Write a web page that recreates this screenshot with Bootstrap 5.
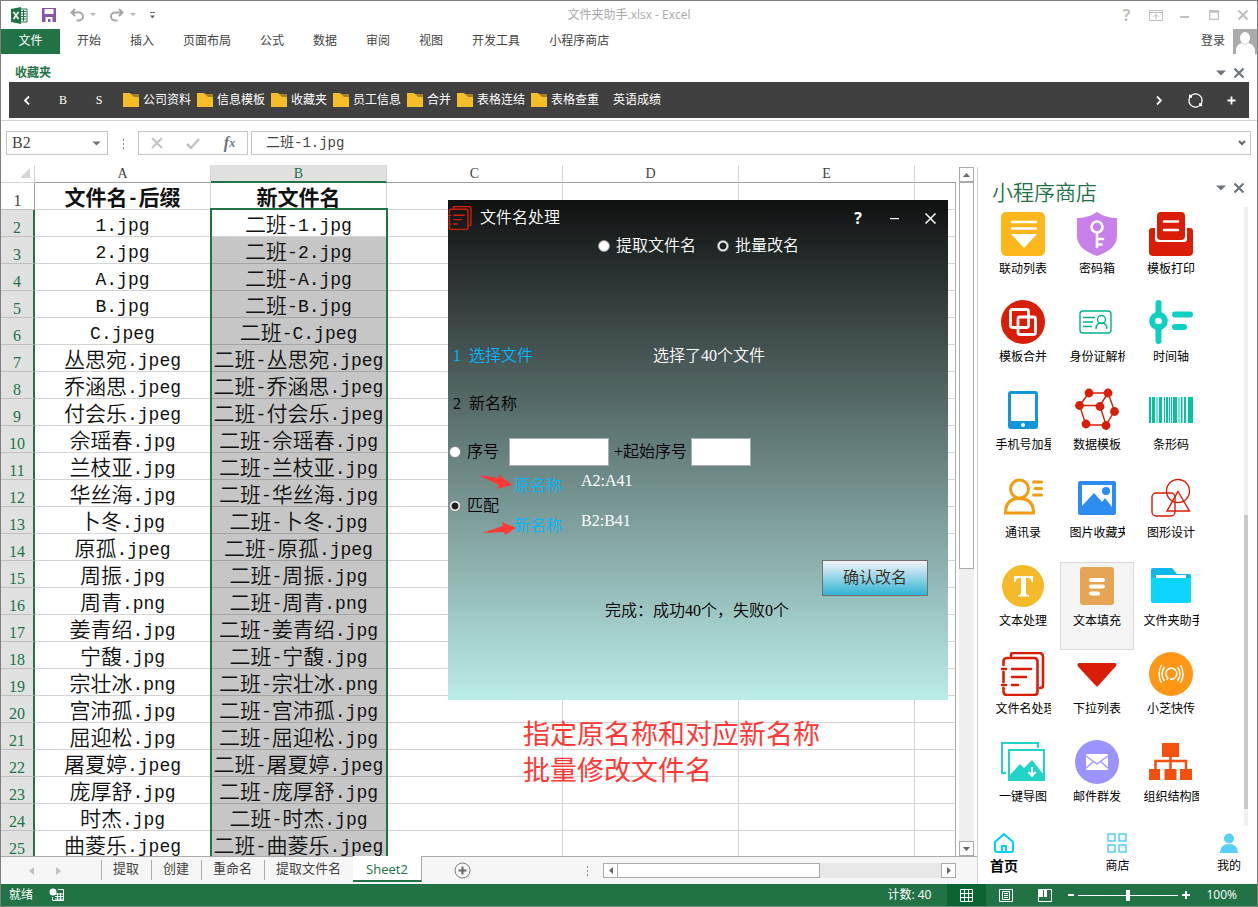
<!DOCTYPE html>
<html lang="zh-CN">
<head>
<meta charset="utf-8">
<meta name="viewport" content="width=device-width, initial-scale=1">
<title>文件夹助手.xlsx - Excel</title>
<link rel="stylesheet" href="https://cdn.jsdelivr.net/npm/bootstrap@5.3.0/dist/css/bootstrap.min.css">
<style>
  :root { --xl: #217346; --line: #d4d4d4; --edge: #ababab; --head: #e1e1e1; }
  body { font: 12px/18px "Open Sans", "Noto Sans CJK SC", sans-serif; color: #444; }
  svg { display: block; flex: none; }
  a { color: inherit; text-decoration: none; }
  .btn { --bs-btn-padding-x: 0; --bs-btn-padding-y: 0; --bs-btn-border-width: 0; --bs-btn-border-radius: 0; font: inherit; color: inherit; display: flex; align-items: center; justify-content: center; }
  .app { height: 100vh; border: 1px solid #7f7f7f; overflow: hidden; background: #fff; }
  .app > * { flex: none; }

  .titlebar { height: 28px; display: grid; grid-template-columns: 1fr auto 1fr; }
  .quick { gap: 14px; padding-left: 10px; }
  .doc-title { color: #aaa; }
  .win-keys { color: #c0c0c0; }
  .win-keys .btn { width: 29px; height: 28px; }
  .ribbon { height: 25px; }
  .ribbon .tabs { gap: 29px; padding-left: 17px; line-height: 24px; }
  .file-tab { width: 59px; background: var(--xl); color: #fff; line-height: 24px; }
  .avatar { width: 24px; height: 25px; }

  .fav-head { height: 28px; padding: 9px 9px 0 14px; color: var(--xl); font-weight: 700; }
  .pane-key { width: 18px; height: 18px; }
  .fav-bar { height: 36px; margin: 0 8px 2px; background: #404040; color: #fff; }
  .fav-bar .key { width: 36px; height: 36px; font-size: 12px; font-family: "Liberation Serif", serif; }
  .fav-list { gap: 6px; padding-left: 6px; }
  .fav-list .btn { gap: 4px; }

  .formula { border-top: 1px solid var(--line); padding: 10px 6px 0 5px; }
  .boxed { height: 24px; border: 1px solid #c6c6c6; background: #fff; }
  .name-box { width: 102px; }
  .name-box input { font: 16px/22px "Liberation Serif", serif; width: 80px; padding: 0 0 0 5px; margin-right: 5px; }
  .fx-box { width: 110px; margin-right: 3px; }
  .fx-input { font: 14px/22px "Liberation Mono", "Noto Sans CJK SC", monospace; padding: 0 0 0 14px; }
  .plain { border: 0; outline: 0; background: none; color: #444; }
  .dots3 { width: 3px; height: 11px; background: radial-gradient(circle, #888 1px, transparent 1px) 0 0 / 3px 4px; }
  .formula .dots3 { margin: 0 13px 0 14px; }

  .app > .work { flex: 1 1 0; min-height: 0; }
  .book { min-width: 0; }
  .sheet-zone { min-height: 0; padding-top: 10px; overflow: hidden; }
  .sheet { overflow: hidden; min-width: 0; }
  .grid-table { table-layout: fixed; width: 100%; border-collapse: separate; border-spacing: 0; color: #111; }
  .grid-table th, .grid-table td { padding: 0; height: 27px; text-align: center; white-space: nowrap; font-weight: 400; }
  .grid-table td { border-right: 1px solid var(--line); border-bottom: 1px solid var(--line); font: 350 21px/24px "Noto Sans CJK SC", sans-serif; }
  .grid-table td:last-child { border-right-color: var(--edge); }
  .grid-table td .latin { font: 18px/14px "Liberation Mono", monospace; vertical-align: 1px; }
  .grid-table thead th { height: 18px; border-bottom: 1px solid #9f9f9f; border-right: 1px solid var(--line); font: 14px/16px "Liberation Serif", serif; color: #444; vertical-align: bottom; }
  .grid-table thead th:last-child { border-right: 0; }
  .grid-table thead th:first-child { border-bottom-color: var(--line); }
  .grid-table thead th.on { background: var(--head); color: var(--xl); border-bottom: 2px solid var(--xl); line-height: 15px; }
  .grid-table tbody th { font: 16px/16px "Liberation Serif", serif; vertical-align: bottom; background: var(--head); color: var(--xl); border-bottom: 1px solid #c0c0c0; border-right: 2px solid var(--xl); }
  .grid-table tbody tr:first-child th { background: #fff; color: #444; border-right: 1px solid #9f9f9f; }
  .grid-table tbody tr:first-child td, .grid-table tbody tr:first-child td .latin { font-weight: 700; }
  .grid-table tr.picked td:nth-child(3) { background: #c6c6c6; border-bottom-color: #a6a6a6; }
  .selection { left: 209px; top: 43px; width: 178px; bottom: 0; border: solid var(--xl); border-width: 2px 2px 0; }

  .vbar { width: 15px; margin: 2px 3px 0; background: #f0f0f0; }
  .vbar .btn, .hbar .btn { width: 15px; height: 15px; border: 1px solid var(--edge); background: #fff; color: #666; }
  .thumb { background: #fff; border: 1px solid var(--edge); }
  .vbar .thumb { flex: 387 0 0; }
  .vbar .rest { flex: 274 0 0; }
  .sheet-tabs { flex: none; height: 28px; background: #f6f6f6; border-top: 1px solid var(--edge); }
  .sheet-tabs .nav-keys { width: 100px; padding: 0 12px 0 28px; color: #c0c0c0; gap: 22px; }
  .sheet-tabs .tabs { font-size: 13px; line-height: 20px; }
  .sheet-tabs .tabs a { border-left: 1px solid var(--edge); padding: 0 12px 0 11px; height: 20px; margin-top: 3px; line-height: 17px; }
  .sheet-tabs .tabs a.current { height: 26px; margin-top: -1px; padding: 4px 13px 0; line-height: 18px; background: #fff; color: var(--xl); border: 0; border-right: 1px solid var(--edge); border-bottom: 2px solid var(--xl); }
  .add-tab { margin-left: 32px; }
  .hbar { width: 353px; height: 15px; margin: 0 21px 0 14px; background: #e8e8e8; }
  .hbar .thumb { flex: 202 0 0; height: 15px; margin-left: -1px; }
  .hbar .rest { flex: 122 0 0; }

  .store { flex: none; width: 280px; border-left: 1px solid var(--line); margin-top: 12px; color: #000; }
  .store-head { height: 40px; padding: 0 9px 0 14px; }
  .store-head h2 { font: 350 21px/26px "Noto Sans CJK SC", sans-serif; color: var(--xl); margin: 11px 0 0; }
  .store-head .pane-key { margin-top: 12px; }
  .store-body { min-height: 0; padding: 3px 9px 0 8px; }
  .tiles { display: grid; grid-template-columns: repeat(3, 74px); grid-auto-rows: 88px; }
  .btn.tile { width: 74px; height: 88px; border: 1px solid transparent; padding-top: 1px; flex-direction: column; justify-content: flex-start; }
  .btn.tile:nth-child(14) { background: #f5f5f5; border-color: #d9d9d9; }
  .tile-name { margin-top: 3px; white-space: nowrap; line-height: 18px; font-family: "Noto Sans CJK SC", sans-serif; }
  .tile-name.cut { width: 55px; overflow: hidden; text-align: left; }
  .rail { width: 4px; background: #f0f0f0; margin-top: -3px; }
  .rail .gap-top { flex: 308 0 0; }
  .rail .grip { flex: 294 0 0; background: #c9c9c9; }
  .rail .gap-end { flex: 17 0 0; }
  .store-nav { height: 58px; padding: 7px 16px 0 12px; }
  .store-nav a { text-align: center; min-width: 24px; }
  .store-nav svg { margin: 0 auto 4px; }
  .store-nav a.current { font-size: 14px; font-weight: 700; }

  .status { height: 22px; background: var(--xl); color: #fff; }
  .view-key { width: 39px; height: 22px; }
  .view-key.active { background: #0a6332; }
  .zoom-range { appearance: none; width: 100px; height: 11px; background: linear-gradient(#fff, #fff) center / 100% 1px no-repeat; }
  .zoom-range::-webkit-slider-thumb { appearance: none; width: 4px; height: 11px; background: #fff; }

  .dialog-box { left: 447px; top: 45px; width: 500px; height: 500px; background: linear-gradient(#101111, #bbede8); font: 350 16px/20px "Liberation Serif", "Noto Sans CJK SC", serif; color: #000; }
  .dlg-title { height: 36px; color: #fff; }
  .dlg-title .btn { width: 36px; height: 36px; }
  .dlg-mode { height: 20px; padding-left: 150px; gap: 21px; color: #fff; }
  .dialog-box label { display: flex; align-items: center; gap: 6px; }
  .dot-radio { appearance: none; width: 12px; height: 12px; margin: 0; border: 1px solid #888; border-radius: 50%; background: #fff; flex: none; }
  .dot-radio:checked { background: radial-gradient(circle, #1c2020 3px, #fff 4px); }
  .sky { color: #00b7ff; }
  .dlg-pick { margin-top: 90px; padding-left: 5px; }
  .dlg-pick .picked-count { margin-left: 120px; }
  .dlg-name { margin-top: 28px; padding-left: 5px; }
  .dlg-serial { margin-top: 24px; height: 28px; padding-left: 1px; }
  .dlg-serial input[type=text] { height: 28px; border: 1px solid #abadb3; background: #fff; }
  .dlg-serial .w-a { width: 100px; margin: 0 5px 0 10px; }
  .dlg-serial .w-b { width: 60px; }
  .dialog-box .start-no { gap: 4px; }
  .dlg-match { padding-left: 1px; gap: 15px; }
  .dlg-match .pair { height: 40px; line-height: 40px; gap: 19px; }
  .dlg-match .pair span { line-height: 30px; }
  .go { width: 106px; height: 36px; margin: 14px 20px 0 auto; background: linear-gradient(#f4f4fa, #30b4d3); border: 1px solid #707070; color: #3a2a20; }
  .dlg-result { margin-top: 5px; padding-left: 157px; }
  .arrow-a { left: 30px; top: 274px; } .arrow-b { left: 34px; top: 322px; }
  .caption { left: 522px; top: 560px; font: 27px/36px "Noto Sans CJK SC", sans-serif; color: #ff3a36; }
</style>
</head>
<body>
<svg class="d-none" aria-hidden="true">
  <symbol id="tri" viewBox="0 0 10 6"><path d="M0 0.500h10L5 5.500z" fill="currentColor"/></symbol>
  <symbol id="cross" viewBox="0 0 12 12"><path d="M1.500 1.500l9 9M10.500 1.500l-9 9" stroke="currentColor" stroke-width="2.200"/></symbol>
  <symbol id="folder" viewBox="0 0 16 14"><path d="M6 1h10v5H6z" fill="#a5802a"/><path d="M0 0h7l4 4h5v10H0z" fill="#f5bd28"/></symbol>
  <symbol id="papers" viewBox="0 0 44 44"><g fill="none" stroke="#d81e06" stroke-width="2.600" stroke-linecap="round"><path d="M10 4V3q0-2 2-2h26q4 0 4 4v28q0 3-3 3"/><path d="M2.500 13V9.500q0-3.500 3.500-3.500h27q3.500 0 3.500 3.500v30q0 3.500-3.500 3.500H6q-3.500 0-3.500-3.500V36M2.500 20v10M1 17h4M1 33h4M11 17h19M11 25h14M11 33h6"/></g></symbol>
</svg>

<div class="app d-flex flex-column">
  <header class="titlebar">
    <div class="quick d-flex align-items-center">
      <svg width="17" height="17" viewBox="0 0 17 17"><path d="M9 2h7v13H9z" fill="#fff" stroke="#217346"/><path d="M10 4.500h5M10 7h5M10 9.500h5M10 12h5M12.500 3v11" stroke="#217346"/><path d="M0 2l10-2v17L0 15z" fill="#217346"/><path d="M2.500 5l5 7M7.500 5l-5 7" stroke="#fff" stroke-width="1.600"/></svg>
      <button class="btn" aria-label="保存"><svg width="14" height="14" viewBox="0 0 14 14"><path d="M0 0h14v14H0z" fill="#8654a8"/><path d="M2.500 1h9v5h-9zM3.500 9h7v5h-2v-3H6v3H3.500z" fill="#fff"/></svg></button>
      <button class="btn" aria-label="撤销"><svg width="26" height="14" viewBox="0 0 26 14"><path d="M5 1L1.500 4.500 5 8M2 4.500h7a3.800 3.800 0 0 1 0 8H6.500" fill="none" stroke="#a6a6a6" stroke-width="2"/><path d="M20 5h6l-3 3z" fill="#b8b8b8"/></svg></button>
      <button class="btn" aria-label="恢复"><svg width="26" height="14" viewBox="0 0 26 14"><path d="M9 1l3.500 3.500L9 8M12 4.500H5a3.800 3.800 0 0 0 0 8h2.500" fill="none" stroke="#a6a6a6" stroke-width="2"/><path d="M20 5h6l-3 3z" fill="#b8b8b8"/></svg></button>
      <button class="btn" aria-label="自定义快速访问工具栏"><svg width="5" height="7" viewBox="0 0 5 7"><path d="M0 0h5v1H0zM0 3.500h5L2.500 6.500z" fill="#666"/></svg></button>
    </div>
    <div class="doc-title align-self-center">文件夹助手.xlsx - Excel</div>
    <div class="win-keys d-flex justify-content-end">
      <button class="btn fw-bold fs-6" aria-label="帮助">?</button>
      <button class="btn" aria-label="功能区显示选项"><svg width="14" height="11" viewBox="0 0 14 11"><path d="M.5.500h13v10H.5zM1 2.500h12M7 9V4.500M4.500 6.500L7 4.500l2.500 2" fill="none" stroke="currentColor"/></svg></button>
      <button class="btn" aria-label="最小化"><svg width="9" height="12" viewBox="0 0 9 12"><path d="M0 7h9v2H0z" fill="currentColor"/></svg></button>
      <button class="btn" aria-label="最大化"><svg width="10" height="10" viewBox="0 0 10 10"><path d="M.5.500h9v9h-9zM0 2h10" fill="none" stroke="currentColor" stroke-width="1.500"/></svg></button>
      <button class="btn" aria-label="关闭"><svg width="12" height="12"><use href="#cross"/></svg></button>
    </div>
  </header>

  <nav class="ribbon d-flex">
    <a href="#" class="file-tab text-center">文件</a>
    <div class="tabs d-flex flex-grow-1">
      <a href="#">开始</a><a href="#">插入</a><a href="#">页面布局</a><a href="#">公式</a><a href="#">数据</a><a href="#">审阅</a><a href="#">视图</a><a href="#">开发工具</a><a href="#">小程序商店</a>
    </div>
    <a href="#" class="me-2 lh-lg">登录</a>
    <svg class="avatar" viewBox="0 0 24 25"><path d="M0 0h24v25H0z" fill="#ababab"/><ellipse cx="12" cy="9" rx="5" ry="6" fill="#fff"/><path d="M3 25v-5q1-5 6-6 3 3 6 0 5 1 7 6v5z" fill="#fff"/></svg>
  </nav>

  <div class="fav-head d-flex align-items-center">
    <span class="me-auto">收藏夹</span>
    <button class="btn pane-key text-secondary" aria-label="面板选项"><svg width="10" height="6"><use href="#tri"/></svg></button>
    <button class="btn pane-key text-secondary" aria-label="关闭面板"><svg width="12" height="12"><use href="#cross"/></svg></button>
  </div>
  <div class="fav-bar d-flex align-items-center">
    <button class="btn key" aria-label="向左"><svg width="6" height="9" viewBox="0 0 6 9"><path d="M5 .500l-4 4 4 4" fill="none" stroke="#fff" stroke-width="1.800"/></svg></button>
    <button class="btn key">B</button>
    <button class="btn key">S</button>
    <div class="fav-list d-flex flex-grow-1">
      <button class="btn"><svg width="16" height="14"><use href="#folder"/></svg>公司资料</button>
      <button class="btn"><svg width="16" height="14"><use href="#folder"/></svg>信息模板</button>
      <button class="btn"><svg width="16" height="14"><use href="#folder"/></svg>收藏夹</button>
      <button class="btn"><svg width="16" height="14"><use href="#folder"/></svg>员工信息</button>
      <button class="btn"><svg width="16" height="14"><use href="#folder"/></svg>合并</button>
      <button class="btn"><svg width="16" height="14"><use href="#folder"/></svg>表格连结</button>
      <button class="btn"><svg width="16" height="14"><use href="#folder"/></svg>表格查重</button>
      <button class="btn ps-2">英语成绩</button>
    </div>
    <button class="btn key" aria-label="向右"><svg width="6" height="9" viewBox="0 0 6 9"><path d="M1 .500l4 4-4 4" fill="none" stroke="#fff" stroke-width="1.800"/></svg></button>
    <button class="btn key" aria-label="刷新"><svg width="15" height="15" viewBox="0 0 15 15" fill="none" stroke="#fff"><path d="M4 2a6.500 6.500 0 0 1 10 5.500q0 2-1 3.500M11 13a6.500 6.500 0 0 1-10-5.500q0-2 1-3.500" stroke-width="1.300"/><path d="M1 3.300h3M11 11.700h3" stroke-width="3"/></svg></button>
    <button class="btn key" aria-label="添加"><svg width="9" height="9" viewBox="0 0 9 9"><path d="M4.500 .500v8M.5 4.500h8" stroke="#fff" stroke-width="1.800"/></svg></button>
  </div>

  <div class="formula d-flex align-items-center">
    <div class="boxed name-box d-flex align-items-center">
      <input class="plain" type="text" value="B2" aria-label="名称框">
      <button class="btn text-secondary" aria-label="展开名称"><svg width="9" height="5"><use href="#tri"/></svg></button>
    </div>
    <div class="dots3"></div>
    <div class="boxed fx-box d-flex align-items-center justify-content-around">
      <button class="btn" aria-label="取消"><svg width="12" height="12" viewBox="0 0 12 12"><path d="M1 1l10 10M11 1L1 11" stroke="#c4c4c4" stroke-width="2"/></svg></button>
      <button class="btn" aria-label="输入"><svg width="14" height="11" viewBox="0 0 14 11"><path d="M1 6l4 4 8-9" fill="none" stroke="#c4c4c4" stroke-width="2.500"/></svg></button>
      <button class="btn fst-italic fw-bold text-secondary" style="font-family:'Liberation Serif',serif" aria-label="插入函数"><span class="fs-6">f</span>x</button>
    </div>
    <div class="boxed flex-grow-1 d-flex align-items-center pe-1">
      <input class="plain fx-input flex-grow-1" type="text" value="二班-1.jpg" aria-label="编辑栏">
      <button class="btn" aria-label="展开编辑栏"><svg width="8" height="6" viewBox="0 0 8 6"><path d="M1 1l3 3 3-3" fill="none" stroke="#666" stroke-width="2"/></svg></button>
    </div>
  </div>

  <main class="work d-flex position-relative">
    <section class="book d-flex flex-column flex-grow-1">
      <div class="sheet-zone d-flex flex-grow-1">
        <div class="sheet flex-grow-1 position-relative">
          <table class="grid-table">
            <colgroup><col style="width:34px"><col style="width:176px"><col style="width:176px"><col style="width:176px"><col style="width:176px"><col style="width:176px"><col></colgroup>
            <thead><tr><th aria-label="全选"><svg class="ms-auto me-1 mb-1" width="10" height="10"><path d="M10 0v10H0z" fill="#d4d4d4"/></svg></th><th>A</th><th class="on">B</th><th>C</th><th>D</th><th>E</th><th></th></tr></thead>
            <tbody id="rows"></tbody>
          </table>
          <div class="selection position-absolute"></div>
        </div>
        <div class="vbar d-flex flex-column">
          <button class="btn" aria-label="向上滚动"><svg width="7" height="4" viewBox="0 0 7 4"><path d="M0 4h7L3.500 0z" fill="currentColor"/></svg></button>
          <div class="thumb"></div><div class="rest"></div>
          <button class="btn" aria-label="向下滚动"><svg width="7" height="4" viewBox="0 0 7 4"><path d="M0 0h7L3.500 4z" fill="currentColor"/></svg></button>
        </div>
      </div>
      <div class="sheet-tabs d-flex align-items-center">
        <div class="nav-keys d-flex">
          <button class="btn" aria-label="上一张"><svg width="5" height="8" viewBox="0 0 5 8"><path d="M5 0v8L0 4z" fill="#c0c0c0"/></svg></button>
          <button class="btn" aria-label="下一张"><svg width="5" height="8" viewBox="0 0 5 8"><path d="M0 0v8l5-4z" fill="#c0c0c0"/></svg></button>
        </div>
        <nav class="tabs d-flex align-self-start"><a href="#">提取</a><a href="#">创建</a><a href="#">重命名</a><a href="#">提取文件名</a><a href="#" class="current">Sheet2</a></nav>
        <button class="btn add-tab" aria-label="新工作表"><svg width="17" height="17" viewBox="0 0 17 17"><circle cx="8.500" cy="8.500" r="7.500" fill="none" stroke="#777"/><path d="M8.500 4.500v8M4.500 8.500h8" stroke="#666" stroke-width="2"/></svg></button>
        <div class="dots3 ms-auto"></div>
        <div class="hbar d-flex">
          <button class="btn" aria-label="向左滚动"><svg width="4" height="7" viewBox="0 0 4 7"><path d="M4 0v7L0 3.500z" fill="currentColor"/></svg></button>
          <div class="thumb"></div><div class="rest"></div>
          <button class="btn" aria-label="向右滚动"><svg width="4" height="7" viewBox="0 0 4 7"><path d="M0 0v7l4-3.500z" fill="currentColor"/></svg></button>
        </div>
      </div>
    </section>

    <aside class="store d-flex flex-column">
      <div class="store-head d-flex">
        <h2 class="me-auto">小程序商店</h2>
        <button class="btn pane-key text-secondary" aria-label="面板选项"><svg width="10" height="6"><use href="#tri"/></svg></button>
        <button class="btn pane-key text-secondary" aria-label="关闭面板"><svg width="12" height="12"><use href="#cross"/></svg></button>
      </div>
      <div class="store-body d-flex flex-grow-1 justify-content-between">
        <div class="tiles">
          <button class="btn tile"><svg width="44" height="44" viewBox="0 0 44 44"><rect width="44" height="44" rx="5" fill="#fbb71c"/><path d="M10 10h26M10 16.500h26" stroke="#fff" stroke-width="2.600"/><path d="M10 22h26L23 36z" fill="#fff"/></svg><span class="tile-name">联动列表</span></button>
          <button class="btn tile"><svg width="44" height="44" viewBox="0 0 44 44"><path d="M22 0q9 6 20 6v18q0 13-20 20Q2 37 2 24V6q11 0 20-6z" fill="#c880ea"/><g fill="none" stroke="#fff" stroke-width="2.600"><circle cx="22" cy="15" r="5.500"/><path d="M22 20.500V35M22 27h6M22 32.500h4.500" stroke-linecap="round"/></g></svg><span class="tile-name">密码箱</span></button>
          <button class="btn tile"><svg width="44" height="44" viewBox="0 0 44 44"><rect x="8" width="28" height="28" rx="4" fill="#d81e06"/><path d="M15 9.500h14M15 18h14" stroke="#fff" stroke-width="2.600" stroke-linecap="round"/><path d="M0 19q0-3 3-3h3v11q0 3 3 3h26q3 0 3-3V16h3q3 0 3 3v21q0 4-4 4H4q-4 0-4-4z" fill="#d81e06"/></svg><span class="tile-name">模板打印</span></button>

          <button class="btn tile"><svg width="44" height="44" viewBox="0 0 44 44"><circle cx="22" cy="22" r="22" fill="#d81e06"/><g fill="none" stroke="#fff" stroke-width="2.800"><rect x="9.500" y="9.500" width="18" height="18" rx="2"/><rect x="17" y="17" width="17.500" height="17.500" rx="2"/></g></svg><span class="tile-name">模板合并</span></button>
          <button class="btn tile"><svg width="44" height="44" viewBox="0 0 44 44"><g fill="none" stroke="#00b28b" stroke-width="1.400"><rect x="5" y="11" width="31" height="22" rx="3"/><path d="M8 17.500h12M8 22h10M8 26.500h9"/><circle cx="26.500" cy="19.500" r="4"/><path d="M21 29q0-6 5.500-6t5.500 6"/></g></svg><span class="tile-name cut">身份证解析</span></button>
          <button class="btn tile"><svg width="44" height="44" viewBox="0 0 44 44"><g fill="none" stroke="#0dd0c0" stroke-linecap="round" stroke-width="6"><path d="M9.500 3v38M26 14.500h15M26 27h9"/></g><circle cx="9.500" cy="21" r="6.300" fill="#fff" stroke="#0dd0c0" stroke-width="6"/></svg><span class="tile-name">时间轴</span></button>

          <button class="btn tile"><svg width="44" height="44" viewBox="0 0 44 44"><rect x="7" y="3" width="30" height="38" rx="3" fill="#1296db"/><path d="M10 6h24v27H10z" fill="#fff"/><circle cx="22" cy="37" r="2" fill="#fff"/></svg><span class="tile-name cut">手机号加星</span></button>
          <button class="btn tile"><svg width="44" height="44" viewBox="0 0 44 44"><g fill="none" stroke="#d81e06" stroke-width="1.400"><path d="M14 5h19l6.500 18L31 37H11L4.500 17.500zM4.500 17.500H25L33 5M25 18l6 19"/></g><g fill="#d81e06"><circle cx="14" cy="5" r="4.400"/><circle cx="33" cy="5" r="4.400"/><circle cx="4.500" cy="17.500" r="4.400"/><circle cx="25" cy="18.500" r="4.400"/><circle cx="39.500" cy="23.500" r="4.400"/><circle cx="11" cy="36" r="4.400"/><circle cx="31" cy="37.500" r="4.400"/></g></svg><span class="tile-name">数据模板</span></button>
          <button class="btn tile"><svg width="44" height="44" viewBox="0 0 44 44"><path d="M0 9h2v26H0zM3 9h3v26H3zM7.500 9h1v26h-1zM10 9h3v26h-3zM15 9h1v26h-1zM17 9h2v26h-2zM20 9h1v26h-1zM22 9h1v26h-1zM24 9h4v26h-4zM29.500 9h1v26h-1zM32 9h1.500v26H32zM35 9h2v26h-2zM39 9h5v26h-5z" fill="#00c5a0"/></svg><span class="tile-name">条形码</span></button>

          <button class="btn tile"><svg width="44" height="44" viewBox="0 0 44 44"><g fill="none" stroke="#f39c12" stroke-width="3"><circle cx="18.500" cy="13" r="9"/><path d="M4.500 37q0-14.500 14-14.500t14 14.500zM32.500 6h8M34 12.500h6.500M32.500 19h8" stroke-linecap="round"/></g></svg><span class="tile-name">通讯录</span></button>
          <button class="btn tile"><svg width="44" height="44" viewBox="0 0 44 44"><rect x="3" y="5" width="38" height="34" rx="2" fill="#2d8cf0"/><path d="M7 9h30v22l-7-9-3 4-8-9L7 30z" fill="#fff"/><circle cx="31" cy="15" r="4" fill="#2d8cf0"/></svg><span class="tile-name cut">图片收藏夹</span></button>
          <button class="btn tile"><svg width="44" height="44" viewBox="0 0 44 44"><g fill="none" stroke="#d81e06" stroke-width="1.400"><circle cx="29" cy="15" r="11.500"/><rect x="3" y="17" width="23" height="23" rx="4"/><path d="M29 15.500L40.500 35H18z"/></g></svg><span class="tile-name">图形设计</span></button>

          <button class="btn tile"><svg width="44" height="44" viewBox="0 0 44 44"><circle cx="22" cy="22" r="21" fill="#f4ba2a"/><path d="M13 12h19v6h-1.500q-.5-4-3.500-4h-2v15q0 2 3 2v1.500H17V31q3 0 3-2V14h-2q-3 0-3.500 4H13z" fill="#fff"/></svg><span class="tile-name">文本处理</span></button>
          <button class="btn tile"><svg width="44" height="44" viewBox="0 0 44 44"><rect x="5" y="3" width="34" height="38" rx="3" fill="#e6a455"/><path d="M16 16h12M16 22.500h12M16 29.500h7" stroke="#fff" stroke-width="4" stroke-linecap="round"/></svg><span class="tile-name">文本填充</span></button>
          <button class="btn tile"><svg width="44" height="44" viewBox="0 0 44 44"><path d="M2 6q0-2 2-2h19l5 6h12q2 0 2 2v6H2z" fill="#0cb8ea"/><path d="M7 11h30v4H7z" fill="#fff"/><path d="M2 14h40v23q0 2-2 2H4q-2 0-2-2z" fill="#0cd6ff"/></svg><span class="tile-name cut">文件夹助手</span></button>

          <button class="btn tile"><svg width="44" height="44"><use href="#papers"/></svg><span class="tile-name cut">文件名处理</span></button>
          <button class="btn tile"><svg width="44" height="44" viewBox="0 0 44 44"><path d="M4 11h36q2.500 1 .5 3.500L23 34q-1 1.200-2 0L3 14.500Q1.500 12 4 11z" fill="#d81e06"/></svg><span class="tile-name">下拉列表</span></button>
          <button class="btn tile"><svg width="44" height="44" viewBox="0 0 44 44"><circle cx="22" cy="22" r="22" fill="#ff9716"/><g fill="none" stroke="#fff" stroke-width="1.500"><path d="M21 27q4 1 6-2.500a5.500 5.500 0 1 0-8 1.500l-1 2M15.500 15q-5 7 0 14M12.500 13q-5 9 0 18M28.500 15q5 7 0 14M31.500 13q5 9 0 18"/></g></svg><span class="tile-name">小芝快传</span></button>

          <button class="btn tile"><svg width="44" height="44" viewBox="0 0 44 44"><g fill="none" stroke="#22d3c8" stroke-width="2"><path d="M5 33H1V3h36v5M8 10h35v30H8z"/></g><path d="M8 36l11-12 4 4 8-8 12 15v6H8z" fill="#22d3c8"/><path d="M31 27v8M27.500 32l3.500 4 3.500-4" fill="none" stroke="#fff" stroke-width="2"/></svg><span class="tile-name">一键导图</span></button>
          <button class="btn tile"><svg width="44" height="44" viewBox="0 0 44 44"><circle cx="22" cy="22" r="22" fill="#9b93ff"/><rect x="11" y="14" width="22" height="16" rx="1" fill="#fff"/><path d="M11 16l11 8 11-8M11 28l7-6M33 28l-7-6" fill="none" stroke="#9b93ff" stroke-width="1.300"/></svg><span class="tile-name">邮件群发</span></button>
          <button class="btn tile"><svg width="44" height="44" viewBox="0 0 44 44"><path d="M13 3h17v14H13zM0 29h11v11H0zM15.500 29h12v11h-12zM31 29h12v11H31z" fill="#f4500f"/><path d="M21.500 17v12M6.500 29v-8H37v8" fill="none" stroke="#f4500f" stroke-width="2.500"/></svg><span class="tile-name cut">组织结构图</span></button>
        </div>
        <div class="rail d-flex flex-column"><div class="gap-top"></div><div class="grip"></div><div class="gap-end"></div></div>
      </div>
      <nav class="store-nav d-flex justify-content-between">
        <a href="#" class="current"><svg width="20" height="20" viewBox="0 0 20 20"><path d="M1 9l9-8 9 8v8q0 2-2 2H3q-2 0-2-2zM8 19v-6h4v6" fill="none" stroke="#00d0ff" stroke-width="2" stroke-linejoin="round"/></svg>首页</a>
        <a href="#"><svg width="20" height="20" viewBox="0 0 20 20"><path d="M1 1h7v7H1zM12 1h7v7h-7zM1 12h7v7H1zM12 12h7v7h-7z" fill="#eefaff" stroke="#5ccdf5" stroke-width="1.500"/></svg>商店</a>
        <a href="#"><svg width="20" height="20" viewBox="0 0 20 20"><circle cx="10" cy="5.500" r="5" fill="#58d0fa"/><path d="M1 20q0-9 9-9t9 9z" fill="#58d0fa"/></svg>我的</a>
      </nav>
    </aside>

    <section class="dialog-box position-absolute" role="dialog" aria-label="文件名处理">
      <div class="dlg-title d-flex align-items-center">
        <svg width="24" height="24"><use href="#papers"/></svg>
        <span class="ms-2 me-auto">文件名处理</span>
        <button class="btn fw-bold fs-6" style="font-family:'Open Sans',sans-serif" aria-label="帮助">?</button>
        <button class="btn" aria-label="最小化"><svg width="9" height="3"><path d="M0 1h9v1.200H0z" fill="#fff"/></svg></button>
        <button class="btn" aria-label="关闭"><svg width="11" height="11" viewBox="0 0 11 11"><path d="M.5.500l10 10M10.500.500l-10 10" stroke="#fff" stroke-width="1.500"/></svg></button>
      </div>
      <div class="dlg-mode d-flex align-items-center">
        <label><input class="dot-radio" type="radio" name="mode">提取文件名</label>
        <label><input class="dot-radio" type="radio" name="mode" checked>批量改名</label>
      </div>
      <div class="dlg-pick d-flex"><a href="#" class="sky">1&nbsp; 选择文件</a><span class="picked-count text-white">选择了40个文件</span></div>
      <div class="dlg-name">2&nbsp; 新名称</div>
      <div class="dlg-serial d-flex align-items-center">
        <label><input class="dot-radio" type="radio" name="rule">序号</label>
        <input class="w-a" type="text" aria-label="序号前缀">
        <label class="start-no">+起始序号<input class="w-b" type="text"></label>
      </div>
      <div class="dlg-match d-flex align-items-center">
        <label><input class="dot-radio" type="radio" name="rule" checked>匹配</label>
        <div>
          <div class="pair d-flex align-items-start"><a href="#" class="sky">原名称</a><span class="text-white">A2:A41</span></div>
          <div class="pair d-flex align-items-start"><a href="#" class="sky">新名称</a><span class="text-white">B2:B41</span></div>
        </div>
      </div>
      <button class="btn go">确认改名</button>
      <div class="dlg-result">完成：成功40个，失败0个</div>
      <svg class="arrow-a position-absolute" width="34" height="16" viewBox="0 0 34 16"><path d="M0 1l21 3-1-4 14 11-15 4 2-4z" fill="#ff3a36"/></svg>
      <svg class="arrow-b position-absolute" width="34" height="14" viewBox="0 0 34 14"><path d="M0 11L21 4 20 0l14 6-11 7-1-3z" fill="#ff3a36"/></svg>
    </section>
    <p class="caption position-absolute m-0">指定原名称和对应新名称<br>批量修改文件名</p>
  </main>

  <footer class="status d-flex align-items-center">
    <span class="ms-2">就绪</span>
    <svg class="ms-3" width="16" height="14" viewBox="0 0 16 14"><circle cx="4" cy="4" r="3.500" fill="#fff"/><path d="M9 1.500h5.500v11h-11V9M6 6h8M6 8.500h8M6 11h8M8.500 5v7M11.500 5v7" fill="none" stroke="#fff"/></svg>
    <span class="ms-auto me-3">计数: 40</span>
    <button class="btn view-key active" aria-label="普通"><svg width="13" height="13" viewBox="0 0 13 13"><path d="M.5.500h12v12H.5zM4.500 0v13M8.500 0v13M0 4.500h13M0 8.500h13" fill="none" stroke="#fff"/></svg></button>
    <button class="btn view-key" aria-label="页面布局"><svg width="14" height="13" viewBox="0 0 14 13"><path d="M.5.500h13v12H.5zM3.500 2.500h7v8h-7zM5 4.500h4M5 6.500h4M5 8.500h4" fill="none" stroke="#fff"/></svg></button>
    <button class="btn view-key" aria-label="分页预览"><svg width="14" height="13" viewBox="0 0 14 13"><path d="M.5.500h13v12H.5z" fill="none" stroke="#fff"/><path d="M1 1h4v7H1zM6 1h3v7H6z" fill="#fff"/></svg></button>
    <button class="btn ps-1" aria-label="缩小"><svg width="6" height="2"><path d="M0 0h6v2H0z" fill="#fff"/></svg></button>
    <input class="zoom-range mx-1" type="range" min="10" max="190" value="100" aria-label="缩放">
    <button class="btn" aria-label="放大"><svg width="8" height="8"><path d="M3 0h2v3h3v2H5v3H3V5H0V3h3z" fill="#fff"/></svg></button>
    <span class="ms-3 me-3 pe-1">100%</span>
  </footer>
</div>

<script>
  const names = ["1.jpg", "2.jpg", "A.jpg", "B.jpg", "C.jpeg", "丛思宛.jpeg", "乔涵思.jpeg", "付会乐.jpeg", "佘瑶春.jpg", "兰枝亚.jpg", "华丝海.jpg", "卜冬.jpg", "原孤.jpeg", "周振.jpg", "周青.png", "姜青绍.jpg", "宁馥.jpg", "宗壮冰.png", "宫沛孤.jpg", "屈迎松.jpg", "屠夏婷.jpeg", "庞厚舒.jpg", "时杰.jpg", "曲菱乐.jpeg"];
  // Latin runs get the half-width face that sits beside full-width characters.
  const mix = t => t.replace(/[\x21-\x7e]+/g, s => `<span class="latin">${s}</span>`);
  const data = [["文件名-后缀", "新文件名"], ...names.map(n => [n, "二班-" + n])];
  document.getElementById("rows").innerHTML = data.map(([a, b], i) =>
    `<tr class="${i > 1 ? "picked" : ""}"><th>${i + 1}</th><td>${mix(a)}</td><td>${mix(b)}</td><td></td><td></td><td></td><td></td></tr>`).join("");
</script>
<script src="https://cdn.jsdelivr.net/npm/bootstrap@5.3.0/dist/js/bootstrap.bundle.min.js"></script>
</body>
</html>
